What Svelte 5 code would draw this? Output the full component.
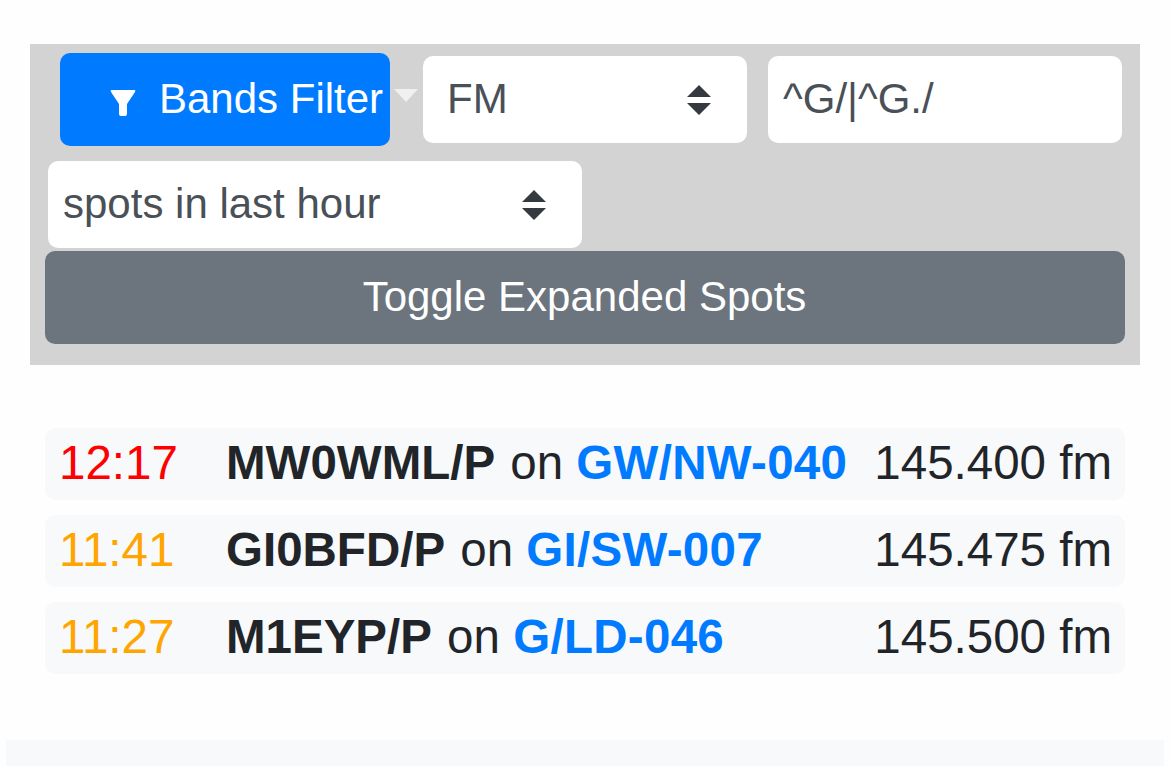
<script>
    const spots = [
        { time: "12:17", color: "#ff0000", call: "MW0WML/P", ref: "GW/NW-040", freq: "145.400 fm" },
        { time: "11:41", color: "#ffa500", call: "GI0BFD/P", ref: "GI/SW-007", freq: "145.475 fm" },
        { time: "11:27", color: "#ffa500", call: "M1EYP/P", ref: "G/LD-046", freq: "145.500 fm" }
    ];
</script>

{#snippet arrows()}
    <svg class="arrows" width="24" height="30" viewBox="0 0 24 30">
        <path d="M12 0 L24 12 H0 Z M0 18 H24 L12 30 Z" fill="#343a40" />
    </svg>
{/snippet}

<div class="page">
    <div class="filters">
        <div class="line first">
            <button class="bands">
                <svg class="funnel" width="26" height="26" viewBox="0 0 26 26">
                    <path d="M1.5 0 H24.5 Q26 0 25 2 L17 14 V24 Q17 26 15 26 H11 Q9 26 9 24 V14 L1 2 Q0 0 1.5 0 Z" fill="#fff" />
                </svg>
                Bands Filter
            </button>
            <span class="caret"></span>
            <div class="select mode">FM {@render arrows()}</div>
            <input class="callsign" value="^G/|^G./" />
        </div>
        <div class="line second">
            <div class="select age">spots in last hour {@render arrows()}</div>
        </div>
        <button class="toggle">Toggle Expanded Spots</button>
    </div>

    <ul class="spots">
        {#each spots as s}
            <li>
                <span class="time" style="color: {s.color}">{s.time}</span>
                <span class="what"><b>{s.call}</b> on <b class="ref">{s.ref}</b></span>
                <span class="freq">{s.freq}</span>
            </li>
        {/each}
    </ul>

    <div class="footer"></div>
</div>

<style>
    :global(body) {
        background: #fefefe;
        overflow: hidden;
    }

    .page {
        height: 766px;
        padding-top: 44px;
        box-sizing: border-box;
        font-family: "Liberation Sans", Arial, sans-serif;
        font-size: 42px;
        color: #212529;
    }

    .filters {
        margin: 0 30px;
        height: 321px;
        box-sizing: border-box;
        padding: 9px 15px 0;
        background: #d3d3d3;
    }

    .line {
        display: flex;
        align-items: flex-start;
        padding-left: 3px;
    }

    .first {
        height: 108px;
        padding-left: 15px;
        padding-right: 3px;
    }

    .second {
        height: 90px;
    }

    .bands {
        width: 330px;
        height: 93px;
        padding: 0 0 2px 50px;
        display: flex;
        align-items: center;
        gap: 23px;
        border: 0;
        border-radius: 10px;
        background: #007bff;
        color: #fff;
        font: inherit;
        white-space: nowrap;
    }

    .funnel {
        margin-top: 8px;
        flex: none;
    }

    .caret {
        width: 0;
        height: 0;
        margin: 36px 5px 0 4px;
        border-left: 12px solid transparent;
        border-right: 12px solid transparent;
        border-top: 13px solid #f0f0f0;
    }

    .select {
        height: 87px;
        display: flex;
        align-items: center;
        justify-content: space-between;
        box-sizing: border-box;
        border-radius: 10px;
        background: #fff;
        box-shadow: 0 0 0 1px #ced4da;
        color: #495057;
    }

    .arrows {
        margin-top: 3px;
    }

    .mode {
        width: 324px;
        margin-top: 3px;
        padding: 0 36px 2px 24px;
    }

    .age {
        width: 534px;
        padding: 0 36px 2px 15px;
    }

    .callsign {
        width: 354px;
        height: 87px;
        margin: 3px 0 0 21px;
        padding: 0 15px 2px;
        box-sizing: border-box;
        border: 0;
        border-radius: 10px;
        background: #fff;
        box-shadow: 0 0 0 1px #ced4da;
        color: #495057;
        font: inherit;
    }

    .toggle {
        display: block;
        width: 100%;
        height: 93px;
        padding: 0 1px 2px 0;
        border: 0;
        border-radius: 10px;
        background: #6c757d;
        color: #fff;
        font: inherit;
    }

    .spots {
        list-style: none;
        margin: 63px 45px 0;
        padding: 0;
        font-size: 47.5px;
    }

    .spots li {
        display: flex;
        align-items: center;
        height: 72px;
        box-sizing: border-box;
        margin-bottom: 15px;
        padding: 0 13px 3px 14px;
        border-radius: 10px;
        background: #f8f9fa;
    }

    .time {
        width: 167px;
        flex: none;
    }

    .what {
        flex: 1;
    }

    .ref {
        color: #007bff;
        letter-spacing: 0.3px;
    }

    .what b:first-child {
        margin-right: 2px;
    }

    .footer {
        height: 26px;
        margin: 66px 6px 0;
        background: #f8f9fa;
    }
</style>
